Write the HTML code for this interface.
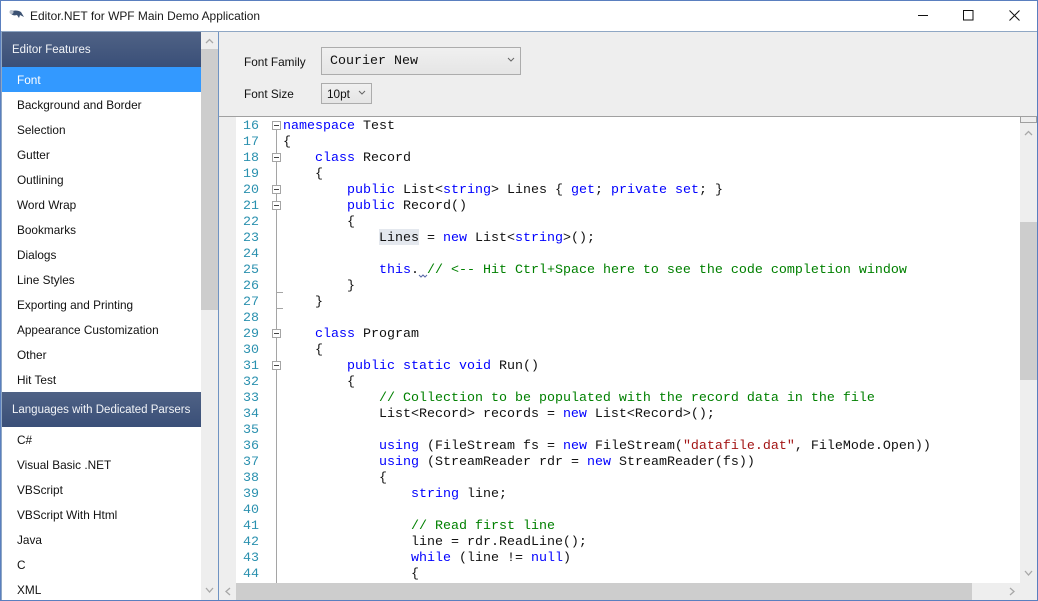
<!DOCTYPE html>
<html><head><meta charset="utf-8"><style>
html,body{margin:0;padding:0}
body{width:1038px;height:601px;position:relative;overflow:hidden;background:#fff;font-family:"Liberation Sans",sans-serif;font-size:11.8px;color:#111}
.a{position:absolute}
.t{position:absolute;white-space:nowrap;line-height:16px}
.hd{position:absolute;left:2px;width:199px;background:linear-gradient(#4f6285,#3a4f78);color:#f2f4f8;font-size:11.5px}
.hd span{position:absolute;left:10px;top:10px;line-height:16px;white-space:nowrap}
.it{position:absolute;left:17px;line-height:16px;white-space:nowrap}
pre{margin:0;position:absolute;font-family:"Liberation Mono",monospace;font-size:13.33px;line-height:16px}
b{font-weight:normal;color:#0000ff}i{font-style:normal;color:#008000}u{text-decoration:none;color:#a31515}
.fb{position:absolute;left:272px;width:7px;height:7px;border:1px solid #a5a5a5;background:#fff}
.fb:after{content:"";position:absolute;left:1px;top:3px;width:5px;height:1px;background:#444}
</style></head><body>
<div class="a" style="left:0;top:0;width:1038px;height:601px;box-sizing:border-box;border:1px solid #5a7fbf;z-index:9;pointer-events:none"></div>

<svg class="a" style="left:9px;top:9px" width="16" height="11" viewBox="0 0 16 11"><path d="M1 3 C4 1 9 1 12 3 L15 8 L11 6 L10 9 L8 6 C5 7 2 6 1 3Z" fill="#3c5273"/><circle cx="2.5" cy="3" r="2" fill="#b8c0cc"/></svg>
<div class="t" style="left:30px;top:8px;color:#1a1a1a;font-size:11.95px">Editor.NET for WPF Main Demo Application</div>
<svg class="a" style="left:915px;top:8px" width="110" height="16" fill="none" stroke="#111"><path d="M3 7.5H13"/><rect x="48.5" y="2.5" width="9.5" height="9.5"/><path d="M94.5 2.5L104.5 12.5M104.5 2.5L94.5 12.5"/></svg>

<div class="a" style="left:1px;top:31px;width:1036px;height:1px;background:#8fa7c4"></div>
<div class="a" style="left:1px;top:31px;width:1px;height:569px;background:#8fa7c4"></div>
<div class="a" style="left:201px;top:32px;width:17px;height:568px;background:#eee"></div>
<div class="a" style="left:201px;top:49px;width:17px;height:261px;background:#cdcdcd"></div>
<div class="a" style="left:218px;top:32px;width:1px;height:568px;background:#6f93c2"></div>
<svg class="a" style="left:201px;top:32px" width="17" height="17" fill="none" stroke="#a8a8a8" stroke-width="1.3"><path d="M5 11L8.5 7.5L12 11"/></svg>
<svg class="a" style="left:201px;top:583px" width="17" height="17" fill="none" stroke="#a8a8a8" stroke-width="1.3"><path d="M5 5L8.5 9L12 5"/></svg>

<div class="hd" style="top:32px;height:35px"><span>Editor Features</span></div>
<div class="a" style="left:2px;top:67px;width:199px;height:25px;background:#3399ff"></div>
<div class="it" style="top:72px;color:#fff">Font</div>
<div class="it" style="top:97px">Background and Border</div>
<div class="it" style="top:122px">Selection</div>
<div class="it" style="top:147px">Gutter</div>
<div class="it" style="top:172px">Outlining</div>
<div class="it" style="top:197px">Word Wrap</div>
<div class="it" style="top:222px">Bookmarks</div>
<div class="it" style="top:247px">Dialogs</div>
<div class="it" style="top:272px">Line Styles</div>
<div class="it" style="top:297px">Exporting and Printing</div>
<div class="it" style="top:322px">Appearance Customization</div>
<div class="it" style="top:347px">Other</div>
<div class="it" style="top:372px">Hit Test</div>
<div class="hd" style="top:392px;height:35px"><span>Languages with Dedicated Parsers</span></div>
<div class="it" style="top:432px">C#</div>
<div class="it" style="top:457px">Visual Basic .NET</div>
<div class="it" style="top:482px">VBScript</div>
<div class="it" style="top:507px">VBScript With Html</div>
<div class="it" style="top:532px">Java</div>
<div class="it" style="top:557px">C</div>
<div class="it" style="top:582px">XML</div>

<div class="a" style="left:219px;top:32px;width:818px;height:84px;background:#eee"></div>
<div class="a" style="left:219px;top:116px;width:818px;height:1px;background:#a0a0a0"></div>
<div class="t" style="left:244px;top:54px">Font Family</div>
<div class="t" style="left:244px;top:86px">Font Size</div>
<div class="a" style="left:321px;top:47px;width:200px;height:28px;box-sizing:border-box;border:1px solid #acacac;background:linear-gradient(#f0f0f0,#e5e5e5)"></div>
<pre style="left:330px;top:54px;color:#111">Courier New</pre>
<svg class="a" style="left:506px;top:56px" width="10" height="8" fill="none" stroke="#666"><path d="M2 2L5 5L8 2"/></svg>
<div class="a" style="left:321px;top:83px;width:51px;height:21px;box-sizing:border-box;border:1px solid #acacac;background:linear-gradient(#f0f0f0,#e5e5e5)"></div>
<div class="t" style="left:327px;top:86px">10pt</div>
<svg class="a" style="left:357px;top:89px" width="10" height="8" fill="none" stroke="#666"><path d="M2 2L5 5L8 2"/></svg>

<div class="a" style="left:219px;top:117px;width:17px;height:466px;background:#eee"></div>
<div class="a" style="left:1020px;top:117px;width:17px;height:483px;background:#eee"></div>
<div class="a" style="left:1020px;top:116px;width:17px;height:7px;box-sizing:border-box;border:1px solid #a0a0a0;background:#eee"></div>
<div class="a" style="left:1020px;top:222px;width:17px;height:158px;background:#cdcdcd"></div>
<svg class="a" style="left:1020px;top:124px" width="17" height="17" fill="none" stroke="#a8a8a8" stroke-width="1.3"><path d="M5 11L8.5 7.5L12 11"/></svg>
<svg class="a" style="left:1020px;top:566px" width="17" height="17" fill="none" stroke="#a8a8a8" stroke-width="1.3"><path d="M5 5L8.5 9L12 5"/></svg>
<div class="a" style="left:219px;top:583px;width:801px;height:17px;background:#eee"></div>
<div class="a" style="left:236px;top:583px;width:736px;height:17px;background:#cdcdcd"></div>
<svg class="a" style="left:219px;top:583px" width="17" height="17" fill="none" stroke="#a8a8a8" stroke-width="1.3"><path d="M11 5L7 8.5L11 12"/></svg>
<svg class="a" style="left:1003px;top:583px" width="17" height="17" fill="none" stroke="#a8a8a8" stroke-width="1.3"><path d="M7 5L11 8.5L7 12"/></svg>

<div class="a" style="left:379px;top:229px;width:40px;height:16px;background:#e4e8ee"></div>
<div class="a" style="left:276px;top:125px;width:1px;height:458px;background:#a5a5a5"></div>
<div class="a" style="left:277px;top:292px;width:6px;height:1px;background:#a5a5a5"></div>
<div class="a" style="left:277px;top:308px;width:6px;height:1px;background:#a5a5a5"></div>
<div class="fb" style="top:121px"></div>
<div class="fb" style="top:153px"></div>
<div class="fb" style="top:185px"></div>
<div class="fb" style="top:201px"></div>
<div class="fb" style="top:329px"></div>
<div class="fb" style="top:361px"></div>
<svg class="a" style="left:418px;top:274px" width="11" height="5" fill="none" stroke="#5a6aa8"><path d="M1 1L3 3L5 1L7 3L9 1"/></svg>

<pre style="left:243px;top:117px;padding-top:2px;height:464px;overflow:hidden;color:#2b91af">16
17
18
19
20
21
22
23
24
25
26
27
28
29
30
31
32
33
34
35
36
37
38
39
40
41
42
43
44</pre>
<pre style="left:283px;top:117px;padding-top:2px;width:736px;height:464px;overflow:hidden;color:#111"><b>namespace</b> Test
{
    <b>class</b> Record
    {
        <b>public</b> List&lt;<b>string</b>&gt; Lines { <b>get</b>; <b>private</b> <b>set</b>; }
        <b>public</b> Record()
        {
            Lines = <b>new</b> List&lt;<b>string</b>&gt;();

            <b>this</b>. <i>// &lt;-- Hit Ctrl+Space here to see the code completion window</i>
        }
    }

    <b>class</b> Program
    {
        <b>public</b> <b>static</b> <b>void</b> Run()
        {
            <i>// Collection to be populated with the record data in the file</i>
            List&lt;Record&gt; records = <b>new</b> List&lt;Record&gt;();

            <b>using</b> (FileStream fs = <b>new</b> FileStream(<u>"datafile.dat"</u>, FileMode.Open))
            <b>using</b> (StreamReader rdr = <b>new</b> StreamReader(fs))
            {
                <b>string</b> line;

                <i>// Read first line</i>
                line = rdr.ReadLine();
                <b>while</b> (line != <b>null</b>)
                {</pre>
</body></html>
